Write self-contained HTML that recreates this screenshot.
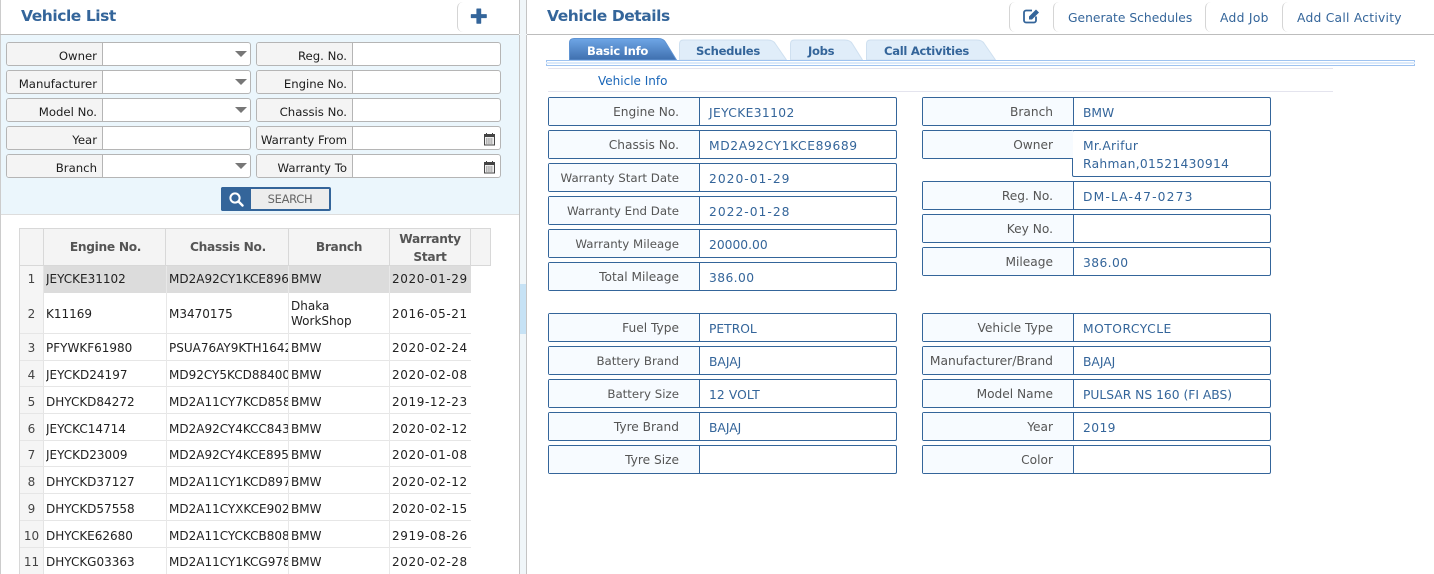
<!DOCTYPE html>
<html><head><meta charset="utf-8"><style>
html,body{margin:0;padding:0;background:#fff}
#p{position:relative;width:1434px;height:574px;overflow:hidden;background:#fff;font-family:"DejaVu Sans","Liberation Sans",sans-serif;font-size:12px;color:#222}
#p div,#p span,#p svg{position:absolute;box-sizing:border-box}
.t{font-weight:bold;font-size:15.5px;letter-spacing:-.45px;color:#34659a;white-space:nowrap}
.lnk{font-size:12.3px;color:#34659a;white-space:nowrap;top:10px;line-height:16px}
.sep{width:6px;height:30px;top:2px;border-left:1px solid #d5d5d5;border-radius:6px 0 0 6px}
.f{height:24px;width:245px;border:1px solid #b5b5b5;border-radius:3px;background:#fff;overflow:hidden}
.f b{position:absolute;left:0;top:0;height:22px;width:96px;background:#f4f4f4;border-right:1px solid #b5b5b5;text-align:right;padding-right:5px;box-sizing:border-box;font-weight:normal;line-height:26px;color:#1c1c1c;white-space:nowrap;font-size:11.7px}
.car{width:0;height:0;border-left:6px solid transparent;border-right:6px solid transparent;border-top:6px solid #777;left:228px;top:8px}
.cal{left:226px;top:5px}
.r{left:20px;width:451px;border-bottom:1px solid #e6e6e6;white-space:nowrap}
.r span{top:0;bottom:0;overflow:hidden;display:block}
.n{left:0;width:24px;background:#f5f5f5;text-align:center;color:#444;border-right:1px solid #e4e4e4}
.e{left:26px;width:120px}
.c{left:149px;width:120px}
.b{left:271px;width:98px}
.w{left:372px;width:79px;letter-spacing:.6px}
.h{top:229px;height:37px;background:#f4f4f4;border-right:1px solid #d8d8d8;border-bottom:1px solid #d8d8d8;font-weight:bold;color:#555;text-align:center;font-size:12.2px;letter-spacing:-.3px;line-height:18px}
.d{height:29px;width:349px;border:1px solid #34659a;border-radius:2px;background:#fff}
.d b{position:absolute;left:0;top:0;bottom:0;width:151px;background:#f7fbff;border-right:1px solid #34659a;font-weight:normal;color:#555;text-align:right;padding-right:20px;box-sizing:border-box;line-height:28px;white-space:nowrap;font-size:12.2px}
.d b.s{font-size:11.8px}
.d i{position:absolute;left:160px;top:1px;font-style:normal;color:#34659a;line-height:28px;white-space:nowrap;font-size:12.3px}
.tb{font-weight:bold;font-size:11.6px;letter-spacing:-.3px;color:#34659a;top:43px;line-height:17px;white-space:nowrap}
</style></head><body><div id="p">

<div style="left:0;top:0;width:1px;height:574px;background:#ccc"></div>
<div style="left:519px;top:0;width:1px;height:574px;background:#c4c4c4"></div>
<div style="left:520px;top:0;width:6px;height:574px;background:#f0f6f9"></div>
<div style="left:520px;top:284px;width:6px;height:50px;background:#c6e2f5"></div>
<div style="left:526px;top:0;width:1px;height:574px;background:#c4c4c4"></div>
<div style="left:0;top:34px;width:1434px;height:1px;background:#bdbdbd"></div>
<div style="left:519px;top:34px;width:8px;height:1px;background:#f0f6f9"></div>

<div class="t" style="left:21px;top:6px;line-height:20px">Vehicle List</div>
<div class="sep" style="left:457px"></div>
<svg style="left:470px;top:7px" width="18" height="18" viewBox="0 0 18 18"><path d="M7 1.5h3.600a.6.6 0 0 1 .6.6v5h5a.6.6 0 0 1 .6.6v2.800a.6.6 0 0 1-.6.6h-5v5a.6.6 0 0 1-.6.6H7a.6.6 0 0 1-.6-.6v-5h-5a.6.6 0 0 1-.6-.6V7.700a.6.6 0 0 1 .6-.6h5v-5A.6.6 0 0 1 7 1.500z" fill="#34659a"/></svg>

<div style="left:1px;top:35px;width:518px;height:180px;background:#ebf6fc;border-bottom:1px solid #ddd"></div>

<div class="f" style="left:6px;top:42px"><b>Owner</b><div class="car"></div></div>
<div class="f" style="left:6px;top:70px"><b>Manufacturer</b><div class="car"></div></div>
<div class="f" style="left:6px;top:98px"><b>Model No.</b><div class="car"></div></div>
<div class="f" style="left:6px;top:126px"><b>Year</b></div>
<div class="f" style="left:6px;top:154px"><b>Branch</b><div class="car"></div></div>
<div class="f" style="left:256px;top:42px"><b>Reg. No.</b></div>
<div class="f" style="left:256px;top:70px"><b>Engine No.</b></div>
<div class="f" style="left:256px;top:98px"><b>Chassis No.</b></div>
<div class="f" style="left:256px;top:126px"><b>Warranty From</b><svg class="cal" width="13" height="14" viewBox="0 0 13 14"><path d="M1.500 2.500h10v10.500h-10z" fill="#eee" stroke="#444"/><path d="M1 2h11v3H1z" fill="#444"/><path d="M3.500 1v2M9.500 1v2" stroke="#444"/><path d="M3 7h7M3 9h7M3 11h7" stroke="#777" stroke-dasharray="1.5 .7"/></svg></div>
<div class="f" style="left:256px;top:154px"><b>Warranty To</b><svg class="cal" width="13" height="14" viewBox="0 0 13 14"><path d="M1.500 2.500h10v10.500h-10z" fill="#eee" stroke="#444"/><path d="M1 2h11v3H1z" fill="#444"/><path d="M3.500 1v2M9.500 1v2" stroke="#444"/><path d="M3 7h7M3 9h7M3 11h7" stroke="#777" stroke-dasharray="1.5 .7"/></svg></div>

<div style="left:221px;top:187px;width:110px;height:24px;background:#ededed;border:2px solid #34659a;border-radius:2px"></div>
<div style="left:221px;top:187px;width:30px;height:24px;background:#34659a;border-radius:2px 0 0 2px"></div>
<svg style="left:228px;top:191px" width="16" height="16" viewBox="0 0 16 16"><circle cx="7" cy="7" r="4.600" fill="none" stroke="#fff" stroke-width="2"/><path d="M10.500 10.500l4 4" stroke="#fff" stroke-width="2.400" stroke-linecap="round"/></svg>
<div style="left:251px;top:190px;width:78px;height:19px;text-align:center;color:#666;line-height:19px;font-size:11.5px;letter-spacing:-.3px">SEARCH</div>

<div style="left:19px;top:228px;width:472px;height:1px;background:#d8d8d8"></div>
<div style="left:19px;top:228px;width:1px;height:346px;background:#d8d8d8"></div>
<div class="h" style="left:20px;width:24px"></div>
<div class="h" style="left:44px;width:122px;line-height:36px;padding-left:2px">Engine No.</div>
<div class="h" style="left:166px;width:123px;line-height:36px;padding-left:2px">Chassis No.</div>
<div class="h" style="left:289px;width:101px;line-height:36px">Branch</div>
<div class="h" style="left:390px;width:81px;padding-top:1px">Warranty<br>Start</div>
<div class="h" style="left:471px;width:20px"></div>

<div class="r" style="top:266px;height:27px;line-height:26px;background:#dcdcdc;left:44px;width:427px;border:0"></div>
<div class="r" style="top:266px;height:27px;line-height:26px;border:0"><span class="n">1</span><span class="e">JEYCKE31102</span><span class="c">MD2A92CY1KCE89689</span><span class="b">BMW</span><span class="w">2020-01-29</span></div>
<div class="r" style="top:293px;height:41px;line-height:43px"><span class="n">2</span><span class="e">K11169</span><span class="c">M3470175</span><span class="b" style="line-height:15px;padding-top:6px;white-space:normal">Dhaka WorkShop</span><span class="w">2016-05-21</span></div>
<div class="r" style="top:334px;height:27px;line-height:29px"><span class="n">3</span><span class="e">PFYWKF61980</span><span class="c">PSUA76AY9KTH16427</span><span class="b">BMW</span><span class="w">2020-02-24</span></div>
<div class="r" style="top:361px;height:26px;line-height:28px"><span class="n">4</span><span class="e">JEYCKD24197</span><span class="c">MD92CY5KCD88400</span><span class="b">BMW</span><span class="w">2020-02-08</span></div>
<div class="r" style="top:387px;height:27px;line-height:30px"><span class="n">5</span><span class="e">DHYCKD84272</span><span class="c">MD2A11CY7KCD85812</span><span class="b">BMW</span><span class="w">2019-12-23</span></div>
<div class="r" style="top:414px;height:27px;line-height:30px"><span class="n">6</span><span class="e">JEYCKC14714</span><span class="c">MD2A92CY4KCC84312</span><span class="b">BMW</span><span class="w">2020-02-12</span></div>
<div class="r" style="top:441px;height:26px;line-height:29px"><span class="n">7</span><span class="e">JEYCKD23009</span><span class="c">MD2A92CY4KCE89512</span><span class="b">BMW</span><span class="w">2020-01-08</span></div>
<div class="r" style="top:467px;height:27px;line-height:30px"><span class="n">8</span><span class="e">DHYCKD37127</span><span class="c">MD2A11CY1KCD89712</span><span class="b">BMW</span><span class="w">2020-02-12</span></div>
<div class="r" style="top:494px;height:27px;line-height:30px"><span class="n">9</span><span class="e">DHYCKD57558</span><span class="c">MD2A11CYXKCE90212</span><span class="b">BMW</span><span class="w">2020-02-15</span></div>
<div class="r" style="top:521px;height:27px;line-height:30px"><span class="n">10</span><span class="e">DHYCKE62680</span><span class="c">MD2A11CYCKCB80812</span><span class="b">BMW</span><span class="w">2919-08-26</span></div>
<div class="r" style="top:548px;height:27px;line-height:29px"><span class="n">11</span><span class="e">DHYCKG03363</span><span class="c">MD2A11CY1KCG97812</span><span class="b">BMW</span><span class="w">2020-02-28</span></div>
<div style="left:166px;top:266px;width:1px;height:308px;background:#e8e8e8"></div>
<div style="left:288px;top:266px;width:1px;height:308px;background:#e8e8e8"></div>
<div style="left:389px;top:266px;width:1px;height:308px;background:#e8e8e8"></div>

<div class="t" style="left:547px;top:6px;line-height:20px">Vehicle Details</div>
<div class="sep" style="left:1009px"></div>
<svg style="left:1023px;top:8px" width="18" height="16" viewBox="0 0 18 16"><path d="M13 8.500v4a2 2 0 0 1-2 2H3a2 2 0 0 1-2-2v-8a2 2 0 0 1 2-2h6" fill="none" stroke="#34659a" stroke-width="1.800"/><path d="M6 8.500L13 1.500l3 3-7 7H6z" fill="#34659a"/></svg>
<div class="sep" style="left:1053px"></div>
<div class="lnk" style="left:1068px">Generate Schedules</div>
<div class="sep" style="left:1205px"></div>
<div class="lnk" style="left:1220px;letter-spacing:.3px">Add Job</div>
<div class="sep" style="left:1282px"></div>
<div class="lnk" style="left:1297px;letter-spacing:.25px">Add Call Activity</div>

<svg style="left:546px;top:36px" width="870" height="34" viewBox="0 0 870 34">
<defs><linearGradient id="g" x1="0" y1="0" x2="0" y2="1"><stop offset="0" stop-color="#6ea6e6"/><stop offset="1" stop-color="#3f6fae"/></linearGradient></defs>
<path d="M133.500 24V8q0-4 4-4h84q6 0 8 4l11 16z" fill="#e0edf9" stroke="#cfe0f0"/>
<path d="M244.500 24V8q0-4 4-4h50q6 0 8 4l10 16z" fill="#e0edf9" stroke="#cfe0f0"/>
<path d="M320.500 24V8q0-4 4-4h106q6 0 8 4l11 16z" fill="#e0edf9" stroke="#cfe0f0"/>
<path d="M23.500 24V7q0-4.500 4.500-4.500h84q6 0 8 4.500l10.500 17z" fill="url(#g)" stroke="#5f93d2"/>
<rect x="0.500" y="24.500" width="868" height="5" fill="#fff" stroke="#9fc3f0"/>
<rect x="0" y="26" width="869" height="2" fill="#dceafa"/>
</svg>
<div class="tb" style="left:587px;color:#fff">Basic Info</div>
<div class="tb" style="left:696px">Schedules</div>
<div class="tb" style="left:808px">Jobs</div>
<div class="tb" style="left:884px">Call Activities</div>

<div style="left:548px;top:68px;width:785px;height:1px;background:#e4e4ee"></div>
<div style="left:598px;top:73px;color:#1a66b8;line-height:17px;font-size:12px">Vehicle Info</div>
<div style="left:548px;top:91px;width:785px;height:1px;background:#e4e4ee"></div>

<div class="d" style="left:548px;top:97px"><b>Engine No.</b><i style="letter-spacing:.35px">JEYCKE31102</i></div>
<div class="d" style="left:548px;top:130px"><b>Chassis No.</b><i style="letter-spacing:.6px">MD2A92CY1KCE89689</i></div>
<div class="d" style="left:548px;top:163px"><b class="s">Warranty Start Date</b><i style="letter-spacing:1px">2020-01-29</i></div>
<div class="d" style="left:548px;top:196px"><b class="s">Warranty End Date</b><i style="letter-spacing:1px">2022-01-28</i></div>
<div class="d" style="left:548px;top:229px"><b class="s">Warranty Mileage</b><i>20000.00</i></div>
<div class="d" style="left:548px;top:262px"><b>Total Mileage</b><i style="letter-spacing:.4px">386.00</i></div>

<div class="d" style="left:922px;top:97px"><b>Branch</b><i>BMW</i></div>
<div class="d" style="left:1072px;top:130px;width:199px;height:47px"><i style="left:10px;line-height:18px;top:6px;letter-spacing:.3px">Mr.Arifur<br>Rahman,01521430914</i></div>
<div class="d" style="left:922px;top:130px;width:151px"><b style="width:150px;border-right:0">Owner</b></div>
<div class="d" style="left:922px;top:181px"><b>Reg. No.</b><i style="letter-spacing:1.15px">DM-LA-47-0273</i></div>
<div class="d" style="left:922px;top:214px"><b>Key No.</b></div>
<div class="d" style="left:922px;top:247px"><b>Mileage</b><i style="letter-spacing:.4px">386.00</i></div>

<div class="d" style="left:548px;top:313px"><b>Fuel Type</b><i>PETROL</i></div>
<div class="d" style="left:548px;top:346px"><b class="s">Battery Brand</b><i>BAJAJ</i></div>
<div class="d" style="left:548px;top:379px"><b class="s">Battery Size</b><i style="letter-spacing:.1px">12 VOLT</i></div>
<div class="d" style="left:548px;top:412px"><b>Tyre Brand</b><i>BAJAJ</i></div>
<div class="d" style="left:548px;top:445px"><b>Tyre Size</b></div>

<div class="d" style="left:922px;top:313px"><b>Vehicle Type</b><i style="letter-spacing:.5px">MOTORCYCLE</i></div>
<div class="d" style="left:922px;top:346px"><b style="font-size:12.3px">Manufacturer/Brand</b><i>BAJAJ</i></div>
<div class="d" style="left:922px;top:379px"><b>Model Name</b><i>PULSAR NS 160 (FI ABS)</i></div>
<div class="d" style="left:922px;top:412px"><b>Year</b><i style="letter-spacing:.4px">2019</i></div>
<div class="d" style="left:922px;top:445px"><b>Color</b></div>

</div></body></html>
